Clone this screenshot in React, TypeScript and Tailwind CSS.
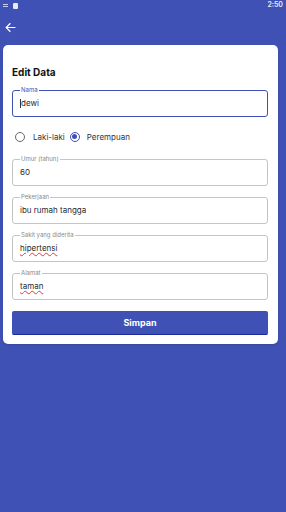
import React from "react";

function Field({ label, value, active, underline }: { label: string; value: string; active?: boolean; underline?: boolean }) {
  return (
    <fieldset
      className={`h-[30px] rounded-[3px] px-[7px] ${active ? "border-[1.5px] border-[#3f51b5]" : "border border-[#c4c4c4]"}`}
    >
      <legend className={`px-[1px] text-[6px] leading-[6px] ${active ? "text-[#3f51b5]" : "text-[#8a8a8a]"}`}>{label}</legend>
      <div className="flex items-center h-[20px] text-[8px] text-[#2a2a2a]">
        {active && <span className="w-[0.5px] h-[9px] bg-[#333] mr-[0.5px]" />}
        <span className={underline ? "underline decoration-wavy decoration-[#e53935] decoration-[0.5px] underline-offset-[1px]" : ""}>{value}</span>
      </div>
    </fieldset>
  );
}

export default function App() {
  return (
    <div className="w-[286px] h-[512px] bg-[#3f51b5] flex flex-col" style={{ fontFamily: "Inter, 'Noto Sans', sans-serif" }}>
      <div className="h-[11px] flex items-center justify-between px-[3px]">
        <div className="flex items-center gap-[5px]">
          <div className="flex flex-col gap-[1px]">
            <div className="w-[5px] h-[1px] bg-[#c9cdf0]" />
            <div className="w-[5px] h-[1px] bg-[#c9cdf0]" />
          </div>
          <div className="w-[5px] h-[6px] bg-[#e8eaf6] rounded-[1px]" />
        </div>
        <span className="text-[7px] text-[#e8eaf6] font-semibold">2:50</span>
      </div>
      <div className="h-[32px] flex items-center pl-[4px]">
        <svg width="13" height="13" viewBox="0 0 24 24" fill="none" stroke="white" strokeWidth="2.2" strokeLinecap="square">
          <path d="M20 12H5M11 5l-7 7 7 7" />
        </svg>
      </div>
      <div className="mx-[3px] mt-[2px] w-[275px] bg-white rounded-[5px] px-[9px] pt-[20px] pb-[9px] flex flex-col shadow-sm">
        <div className="text-[10px] font-bold text-[#111] leading-[14px] h-[22px]">Edit Data</div>
        <div className="flex flex-col w-[256px]">
          <Field label="Nama" value="dewi" active />
          <div className="flex items-center h-[39px] pl-[3px] text-[8px] text-[#333]">
            <span className="w-[10px] h-[10px] rounded-full border-[1.3px] border-[#666]" />
            <span className="ml-[8px]">Laki-laki</span>
            <span className="ml-[5px] w-[10px] h-[10px] rounded-full border-[1.3px] border-[#3f51b5] flex items-center justify-center">
              <span className="w-[5px] h-[5px] rounded-full bg-[#3f51b5]" />
            </span>
            <span className="ml-[7px]">Perempuan</span>
          </div>
          <div className="flex flex-col gap-[8px]">
            <Field label="Umur (tahun)" value="60" />
            <Field label="Pekerjaan" value="ibu rumah tangga" />
            <Field label="Sakit yang diderita" value="hipertensi" underline />
            <Field label="Alamat" value="taman" underline />
          </div>
          <button className="mt-[11px] h-[24px] w-full rounded-[2px] bg-[#3f51b5] border-b border-[#1a2a9a] text-white text-[9px] font-bold">
            Simpan
          </button>
        </div>
      </div>
    </div>
  );
}
